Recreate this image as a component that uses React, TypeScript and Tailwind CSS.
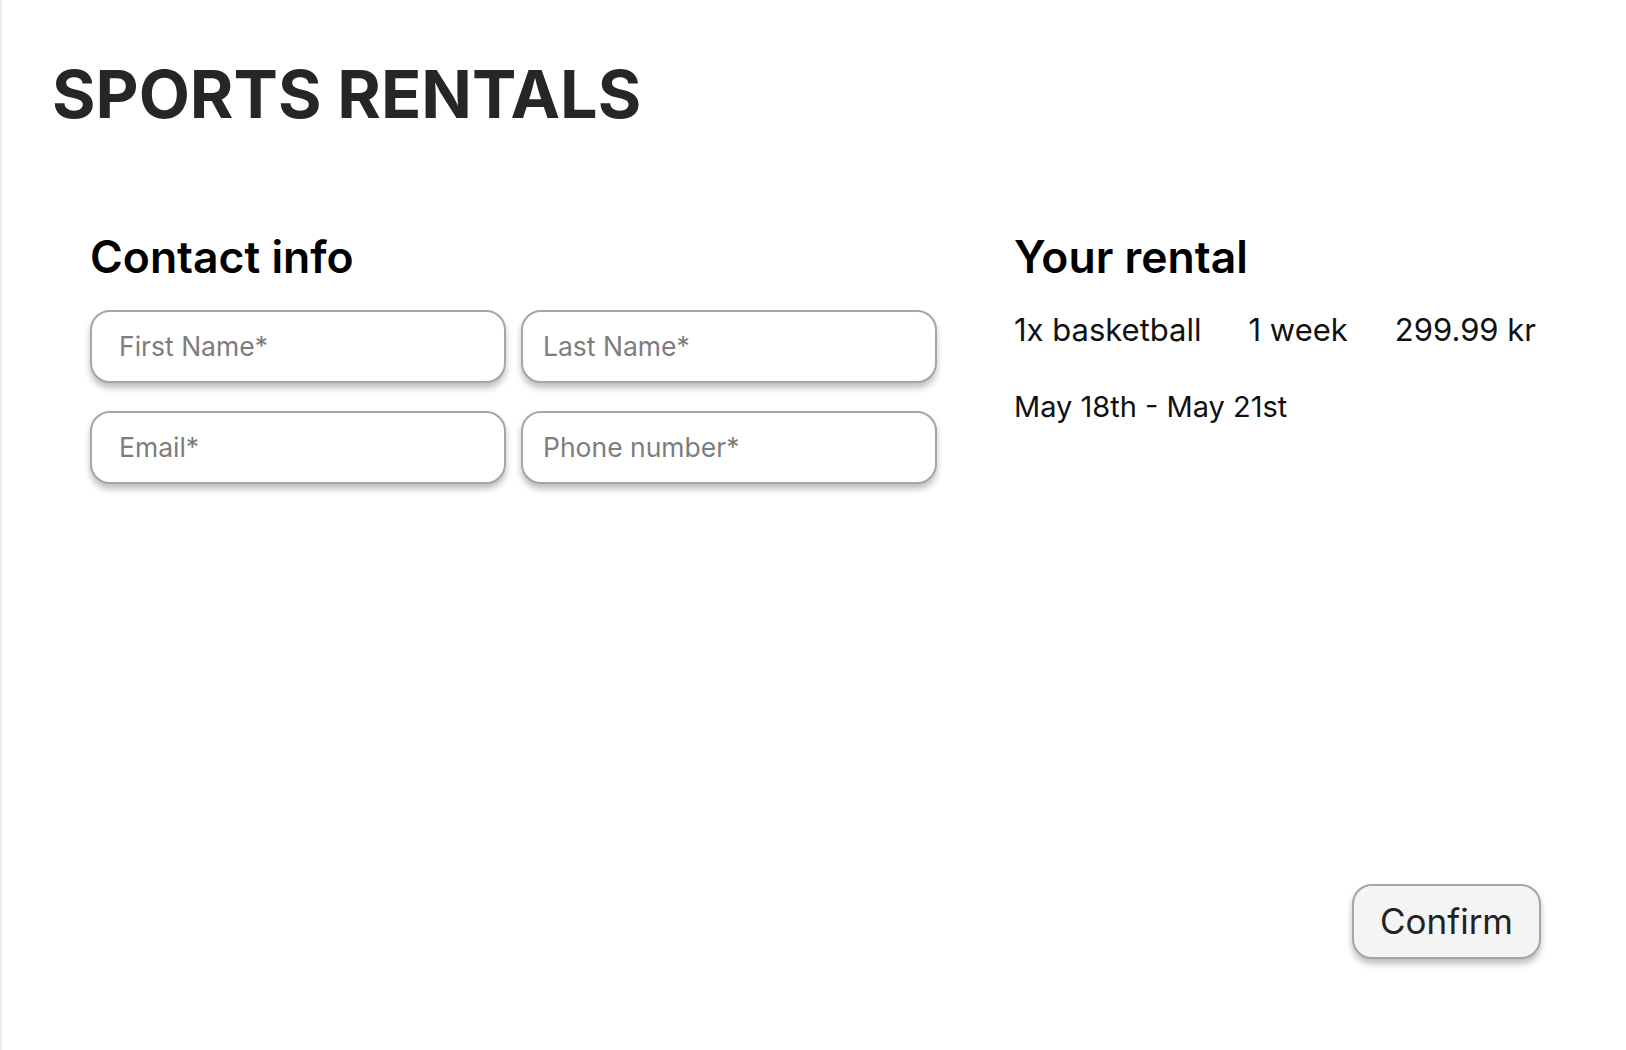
import { useState } from "react";

type Field = { name: string; placeholder: string; pad: string };

const fields: Field[] = [
  { name: "firstName", placeholder: "First Name*", pad: "pl-[27px]" },
  { name: "lastName", placeholder: "Last Name*", pad: "pl-[20px]" },
  { name: "email", placeholder: "Email*", pad: "pl-[27px]" },
  { name: "phone", placeholder: "Phone number*", pad: "pl-[20px]" },
];

export default function App() {
  const [values, setValues] = useState<Record<string, string>>({});

  return (
    <div className="h-[1050px] w-full bg-white border-l-2 border-[#ececec] flex flex-col font-['Inter','Liberation_Sans',sans-serif]">
      <h1 className="pl-[50px] pt-[61px] text-[66.5px] font-bold leading-none text-[#262626]">
        SPORTS RENTALS
      </h1>

      <div className="flex flex-1 pl-[88px] mt-[107px]">
        {/* contato */}
        <div className="w-[846px]">
          <h2 className="text-[44.5px] font-semibold leading-none text-black mb-[31px]">
            Contact info
          </h2>
          <div className="grid grid-cols-[416px_416px] gap-x-[15px] gap-y-[28px]">
            {fields.map((f) => (
              <input
                key={f.name}
                type="text"
                value={values[f.name] || ""}
                onChange={(e) =>
                  setValues({ ...values, [f.name]: e.target.value })
                }
                placeholder={f.placeholder}
                className={`h-[73px] w-full rounded-[20px] border-2 border-[#a6a6a6] bg-white ${f.pad} pr-4 pb-[2px] text-[26.5px] text-[#222] placeholder:text-[#7d7d7d] shadow-[0_5px_6px_rgba(0,0,0,0.25)] focus:outline-none`}
              />
            ))}
          </div>
        </div>

        {/* resumo do aluguel */}
        <div className="ml-[78px]">
          <h2 className="text-[44.5px] font-semibold leading-none text-black">
            Your rental
          </h2>
          <div className="mt-[35px] flex gap-[47px] text-[31px] leading-none text-[#111]">
            <span>1x basketball</span>
            <span>1 week</span>
            <span>299.99 kr</span>
          </div>
          <p className="mt-[47px] text-[29px] leading-none text-[#111]">
            May 18th - May 21st
          </p>
        </div>
      </div>

      <div className="flex justify-end pr-[85px] pb-[91px]">
        <button
          type="button"
          className="h-[75px] w-[189px] rounded-[20px] border-2 border-[#a6a6a6] bg-[#f4f4f4] text-[35px] text-[#222] shadow-[0_5px_6px_rgba(0,0,0,0.25)]"
        >
          Confirm
        </button>
      </div>
    </div>
  );
}
